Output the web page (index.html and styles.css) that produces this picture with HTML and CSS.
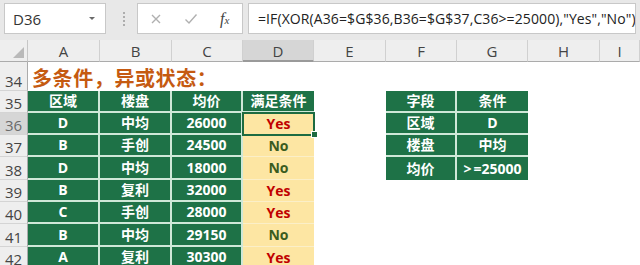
FILE: index.html
```html
<!DOCTYPE html>
<html lang="zh">
<head>
<meta charset="utf-8">
<link rel="stylesheet" href="styles.css">
</head>
<body>
<div class="app">
  <div class="bar">
    <div class="namebox"><span class="ref">D36</span><span class="caret"></span></div>
    <div class="grip">
      <svg width="4" height="16" viewBox="0 0 4 16"><circle cx="2" cy="2" r="1" fill="#9a9a9a"/><circle cx="2" cy="6" r="1" fill="#9a9a9a"/><circle cx="2" cy="10" r="1" fill="#9a9a9a"/><circle cx="2" cy="14" r="1" fill="#9a9a9a"/></svg>
    </div>
    <div class="fxbox">
      <svg class="ico" width="12" height="12" viewBox="0 0 12 12"><path d="M2 2 L10 10 M10 2 L2 10" stroke="#b0b0b0" stroke-width="1.4" fill="none"/></svg>
      <svg class="ico" width="14" height="12" viewBox="0 0 14 12"><path d="M1.5 6.5 L5 10 L12.5 1.5" stroke="#b0b0b0" stroke-width="1.4" fill="none"/></svg>
      <span class="fx">f<span class="fxsub">x</span></span>
    </div>
    <div class="formula">=IF(XOR(A36=$G$36,B36=$G$37,C36&gt;=25000),"Yes","No")</div>
  </div>

  <div class="sheet">
    <div class="row hdr">
      <div class="corner"><span class="tri"></span></div>
      <div class="ch">A</div><div class="ch">B</div><div class="ch">C</div><div class="ch ch-sel">D</div><div class="ch">E</div><div class="ch">F</div><div class="ch">G</div><div class="ch">H</div><div class="ch">I</div>
    </div>

    <div class="row r34">
      <div class="rh">34</div>
      <div class="title">多条件，异或状态：</div>
    </div>

    <div class="row r35">
      <div class="rh">35</div>
      <div class="g">区域</div><div class="g">楼盘</div><div class="g">均价</div><div class="g gl">满足条件</div>
      <div class="e"></div>
      <div class="g">字段</div><div class="g gl">条件</div>
      <div class="e"></div><div class="e"></div>
    </div>

    <div class="row r36">
      <div class="rh rh-sel">36</div>
      <div class="g">D</div><div class="g">中均</div><div class="g">26000</div><div class="y yes sel">Yes</div>
      <div class="e"></div>
      <div class="g">区域</div><div class="g gl">D</div>
      <div class="e"></div><div class="e"></div>
    </div>

    <div class="row r37">
      <div class="rh">37</div>
      <div class="g">B</div><div class="g">手创</div><div class="g">24500</div><div class="y no">No</div>
      <div class="e"></div>
      <div class="g">楼盘</div><div class="g gl">中均</div>
      <div class="e"></div><div class="e"></div>
    </div>

    <div class="row r38">
      <div class="rh">38</div>
      <div class="g">D</div><div class="g">中均</div><div class="g">18000</div><div class="y no">No</div>
      <div class="e"></div>
      <div class="g gb">均价</div><div class="g gl gb"><span class="op">&gt;</span>=25000</div>
      <div class="e"></div><div class="e"></div>
    </div>

    <div class="row r39">
      <div class="rh">39</div>
      <div class="g">B</div><div class="g">复利</div><div class="g">32000</div><div class="y yes">Yes</div>
    </div>

    <div class="row r40">
      <div class="rh">40</div>
      <div class="g">C</div><div class="g">手创</div><div class="g">28000</div><div class="y yes">Yes</div>
    </div>

    <div class="row r41">
      <div class="rh">41</div>
      <div class="g">B</div><div class="g">中均</div><div class="g">29150</div><div class="y no">No</div>
    </div>

    <div class="row r42">
      <div class="rh">42</div>
      <div class="g">A</div><div class="g">复利</div><div class="g">30300</div><div class="y yes">Yes</div>
    </div>
  </div>
</div>
</body>
</html>
```

FILE: styles.css
```css
html, body {
  margin: 0;
  padding: 0;
  background: #ffffff;
}

.app {
  width: 640px;
  height: 265px;
  overflow: hidden;
  background: #ffffff;
  font-family: "Open Sans", "Noto Sans CJK SC", sans-serif;
}

/* ---------- formula bar ---------- */
.bar {
  height: 40px;
  box-sizing: border-box;
  padding: 3px 0 0 4px;
  background: #e8e8e8;
  display: flex;
  align-items: flex-start;
}

.namebox {
  width: 102px;
  height: 31px;
  box-sizing: border-box;
  border: 1px solid #c8c8c8;
  background: #ffffff;
  display: flex;
  align-items: center;
  justify-content: space-between;
  padding: 0 8px 0 8px;
}

.ref {
  font-size: 15px;
  color: #333333;
}

.caret {
  width: 0;
  height: 0;
  border-left: 3px solid transparent;
  border-right: 3px solid transparent;
  border-top: 3px solid #6a6a6a;
  margin-right: 2px;
}

.grip {
  width: 31px;
  height: 31px;
  display: flex;
  align-items: center;
  justify-content: center;
  padding-left: 4px;
  box-sizing: border-box;
}

.fxbox {
  width: 106px;
  height: 31px;
  box-sizing: border-box;
  border: 1px solid #c8c8c8;
  background: #ffffff;
  display: flex;
  align-items: center;
  padding-left: 12px;
  gap: 22px;
}

.fx {
  font-family: "Liberation Serif", serif;
  font-style: italic;
  font-size: 16px;
  color: #444444;
}

.fxsub {
  font-size: 11px;
}

.formula {
  margin-left: 5px;
  width: 388px;
  height: 31px;
  box-sizing: border-box;
  border: 1px solid #c8c8c8;
  background: #ffffff;
  display: flex;
  align-items: center;
  padding-left: 9px;
  font-size: 14px;
  letter-spacing: 0.1px;
  color: #222222;
  white-space: nowrap;
  overflow: hidden;
}

/* ---------- sheet grid ---------- */
.row {
  display: grid;
  grid-template-columns: 28px 72px 72px 71px 71px 72px 71px 71px 72px 40px;
}

.hdr { height: 22px; background: #e8e8e8; }
.r34 { height: 29px; }
.r35, .r36, .r37, .r39, .r40, .r42 { height: 22px; }
.r38, .r41 { height: 23px; }

.corner {
  position: relative;
  background: #eeeeee;
  border-right: 1px solid #c6c6c6;
  border-bottom: 1px solid #ababab;
}

.tri {
  position: absolute;
  right: 3px;
  bottom: 3px;
  width: 0;
  height: 0;
  border-left: 11px solid transparent;
  border-bottom: 11px solid #b9b9b9;
}

.ch {
  background: #eeeeee;
  border-right: 1px solid #d0d0d0;
  border-bottom: 1px solid #ababab;
  display: flex;
  align-items: flex-end;
  justify-content: center;
  padding-bottom: 2px;
  font-size: 15px;
  color: #444444;
  line-height: 1;
}

.ch-sel {
  background: #d6d6d6;
  border-bottom: 2px solid #9a9a9a;
  padding-bottom: 1px;
}

.rh {
  background: #eeeeee;
  border-right: 1px solid #ababab;
  border-bottom: 1px solid #d4d4d4;
  display: flex;
  align-items: flex-end;
  justify-content: center;
  padding-bottom: 1px;
  font-size: 15px;
  line-height: 1;
  color: #444444;
}

.rh-sel {
  background: #d6d6d6;
  color: #6a6a6a;
}

.title {
  grid-column: 2 / -1;
  display: flex;
  align-items: flex-end;
  padding-left: 4px;
  font-family: "Noto Sans CJK SC", sans-serif;
  font-weight: 700;
  font-size: 20px;
  letter-spacing: 0.6px;
  line-height: 1;
  padding-bottom: 3px;
  color: #c55a11;
}

.g {
  background: #1e7247;
  color: #ffffff;
  font-weight: 700;
  font-size: 14px;
  display: flex;
  align-items: center;
  justify-content: center;
  border-right: 2px solid #cfe8d8;
  border-bottom: 2px solid #cfe8d8;
  box-sizing: border-box;
  line-height: 1;
}

.gl { border-right-width: 0; }
.gb { border-bottom-width: 0; }

.op { margin-right: 2px; }

.y {
  background: #fde6a3;
  font-weight: 700;
  font-size: 14px;
  display: flex;
  align-items: center;
  justify-content: center;
  border-bottom: 1px solid #fbefc8;
  box-sizing: border-box;
  line-height: 1;
}

.yes { color: #c00000; }
.no { color: #3b5c1f; }

.sel {
  position: relative;
  z-index: 2;
  outline: 2px solid #1d6b41;
  outline-offset: -1px;
}

.sel::after {
  content: "";
  position: absolute;
  right: -4px;
  bottom: -4px;
  width: 5px;
  height: 5px;
  background: #1d6b41;
  border: 1px solid #ffffff;
}
```
